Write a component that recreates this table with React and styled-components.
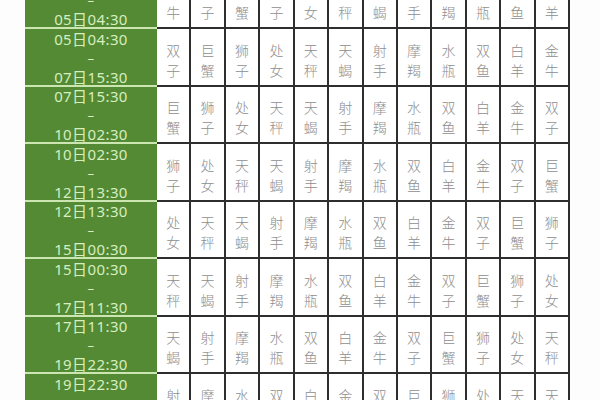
import React from "react";
import styled, { createGlobalStyle } from "styled-components";

const Global = createGlobalStyle`
  html, body { margin: 0; padding: 0; background: #ffffff; }
  body { width: 600px; height: 400px; overflow: hidden; }
`;

const Page = styled.div`
  width: 600px;
  height: 400px;
  overflow: hidden;
  background: #fdfdfd;
`;

const Table = styled.div`
  display: grid;
  grid-template-columns: 132px repeat(12, 1fr);
  grid-auto-rows: 57.5px;
  width: 545px;
  margin: -28.5px 0 0 25px;
`;

const TimeCell = styled.div`
  box-sizing: border-box;
  background: #538a33;
  border-bottom: 2px solid #cbe6b0;
  color: #d6eec0;
  font-family: "Noto Sans", "Noto Sans CJK SC", sans-serif;
  font-size: 15px;
  line-height: 19px;
  padding-top: 3px;
  display: flex;
  flex-direction: column;
  align-items: center;
  justify-content: center;
  letter-spacing: 0.4px;
`;

const Dash = styled.span`
  font-size: 13px;
`;

const SignCell = styled.div`
  box-sizing: border-box;
  background: #ffffff;
  border-right: 2px solid #2e2e2e;
  border-bottom: 2px solid #2e2e2e;
  display: flex;
  flex-direction: column;
  align-items: center;
  justify-content: center;
  padding-top: 6px;
  color: #8e8e8e;
  font-family: "Noto Sans CJK SC", sans-serif;
  font-weight: 300;
  font-size: 14px;
  line-height: 20px;
`;

const signs = ["金牛", "双子", "巨蟹", "狮子", "处女", "天秤", "天蝎", "射手", "摩羯", "水瓶", "双鱼", "白羊"];
const times = ["02日17:30", "05日04:30", "07日15:30", "10日02:30", "12日13:30", "15日00:30", "17日11:30", "19日22:30", "22日09:30"];

const rows = Array.from({ length: 8 }, (_, i) => ({
  from: times[i],
  to: times[i + 1],
  signs: signs.map((_, j) => signs[(i + j) % 12]),
}));

export default function App() {
  return (
    <Page>
      <Global />
      <Table>
        {rows.map((r, i) => (
          <React.Fragment key={i}>
            <TimeCell>
              <span>{r.from}</span>
              <Dash>–</Dash>
              <span>{r.to}</span>
            </TimeCell>
            {r.signs.map((s, j) => (
              <SignCell key={j}>
                <span>{s[0]}</span>
                <span>{s[1]}</span>
              </SignCell>
            ))}
          </React.Fragment>
        ))}
      </Table>
    </Page>
  );
}
